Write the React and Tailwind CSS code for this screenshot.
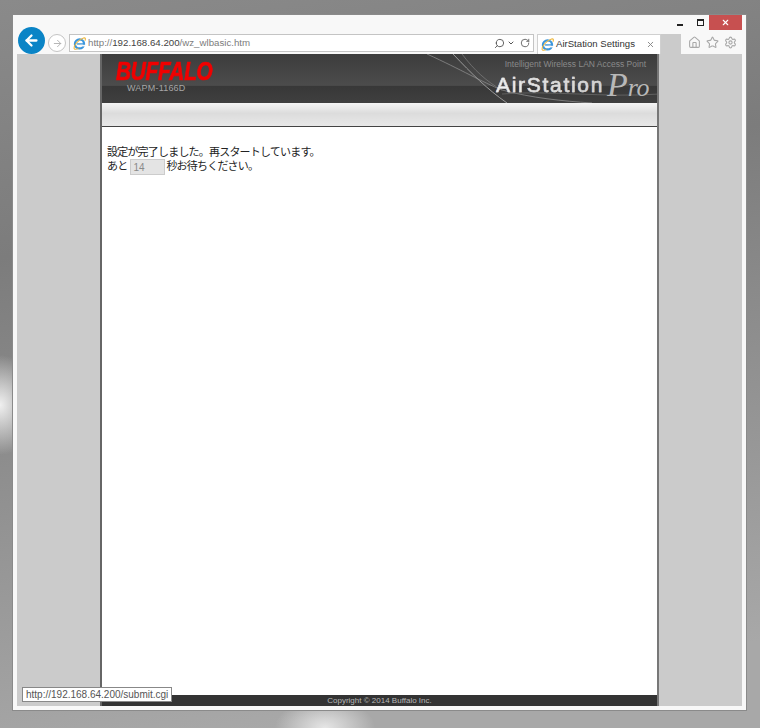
import { ArrowLeft, ArrowRight, Home, Star, Settings, Search, RotateCw, X, ChevronDown } from 'lucide-react';

const IeLogo = ({ size = 14 }) => (
  <svg width={size} height={size} viewBox="0 0 16 16" className="shrink-0">
    <circle cx="8" cy="8.500" r="5.600" fill="none" stroke="#3b96dc" strokeWidth="2.800" />
    <rect x="5" y="7.700" width="8" height="1.700" fill="#3b96dc" />
    <rect x="9" y="9.600" width="6" height="2" fill="#f8f8f8" />
    <path d="M1.500 14.500C.5 11 6 3.500 13 1.200c2.500-.6 2.800 1.200 1.600 3.300M1.500 14.500c1.200 1 3.500.5 5-.5" fill="none" stroke="#eeb73c" strokeWidth="1.300" />
  </svg>
);

const AddressBar = () => (
  <div className="ml-[3px] flex h-[18px] w-[465px] items-center border border-[#c4c4c4] bg-white pl-[3px] pr-[3px] font-['Liberation_Sans',sans-serif] text-[9.700px]">
    <IeLogo size={13} />
    <span className="ml-[2px] text-[#7c7c7c]">http://</span>
    <span className="text-[#444444]">192.168.64.200</span>
    <span className="text-[#7c7c7c]">/wz_wlbasic.htm</span>
    <div className="ml-auto flex items-center gap-[2px] text-[#555555]">
      <Search size={11} className="-scale-x-100" />
      <ChevronDown size={8} strokeWidth={3} />
      <RotateCw size={10} className="ml-[3px]" />
    </div>
  </div>
);

const Tab = () => (
  <div className="ml-[3px] flex h-[20px] w-[124px] items-center self-end border-x border-t border-[#d0d0d0] bg-white pl-[3px] pr-[3px] font-['Liberation_Sans',sans-serif] text-[9.600px] text-[#333333]">
    <IeLogo size={13} />
    <span className="ml-[2px]">AirStation Settings</span>
    <X size={9} strokeWidth={2.500} className="ml-auto mr-[2px] text-[#888888]" />
  </div>
);

const BrowserChrome = () => (
  <div className="h-[39px] shrink-0 bg-[#f8f8f8]">
    <div className="flex h-[15px] items-start justify-end">
      <div className="mt-[9px] h-[2px] w-[6px] bg-[#222222]" />
      <div className="ml-[14px] mt-[4px] h-[7px] w-[7px] border border-t-2 border-[#222222]" />
      <div className="ml-[5px] flex h-[15px] w-[33px] items-center justify-center bg-[#c75050] text-white">
        <X size={9} strokeWidth={3} />
      </div>
    </div>
    <div className="flex h-[24px] items-end pl-[1px]">
      <div className="relative z-10 h-[27px] w-[27px] shrink-0 overflow-hidden">
        <div className="flex h-[27px] w-[27px] items-center justify-center rounded-full bg-[#0a84c6] text-white">
          <ArrowLeft size={17} strokeWidth={3.200} />
        </div>
      </div>
      <div className="mb-[2px] ml-[3px] flex h-[18px] w-[18px] shrink-0 items-center justify-center rounded-full border border-[#c4c4c4] bg-white text-[#b0b0b0]">
        <ArrowRight size={11} />
      </div>
      <div className="mb-[2px] flex items-center">
        <AddressBar />
      </div>
      <Tab />
      <div className="h-[20px] w-[20px] bg-[#cbcbcb]" />
      <div className="mb-[5px] ml-[7px] flex items-center gap-[5px] text-[#a8a8a8]">
        <Home size={13} />
        <Star size={13} />
        <Settings size={13} />
      </div>
    </div>
  </div>
);

const Header = () => (
  <div className="relative h-[49px] shrink-0 overflow-hidden bg-[linear-gradient(#3c3c3c,#4c4c4c_64%,#383838_66%,#3f3f3f)]">
    <svg width="558" height="49" viewBox="0 0 558 49" fill="none" className="absolute inset-0">
      <path d="M325 0C360 16 380 28 400 36C430 44 460 47 490 49" stroke="#8a8a8a" strokeWidth="0.800" />
      <path d="M351 0C370 20 385 35 405 49" stroke="#999999" strokeWidth="1" />
      <path d="M360 0C372 16 385 28 400 36" stroke="#777777" strokeWidth="0.800" />
      <path d="M400 40C450 36 500 44 558 40" stroke="#6a6a6a" strokeWidth="0.800" />
    </svg>
    <div className="absolute left-[14px] top-[6px] origin-left scale-x-[0.800] font-['Liberation_Sans',sans-serif] text-[26px] font-bold italic leading-[22px] tracking-[-0.300px] text-[#f00000] [-webkit-text-stroke:0.700px_#f00000]">
      BUFFALO
    </div>
    <div className="absolute left-[25px] top-[28px] font-['Liberation_Sans',sans-serif] text-[9px] leading-[12px] tracking-[0.200px] text-[#a6a6a6]">
      WAPM-1166D
    </div>
    <div className="absolute right-[11px] top-[4px] font-['Liberation_Sans',sans-serif] text-[8.500px] leading-[12px] text-[#8a8a8a]">
      Intelligent Wireless LAN Access Point
    </div>
    <div className="absolute left-[394px] top-[19px] bg-[linear-gradient(90deg,#f4f4f4,#cfcfcf)] bg-clip-text font-['Liberation_Sans',sans-serif] text-[21px] leading-[24px] tracking-[1.700px] text-transparent [-webkit-text-stroke:0.500px_#d8d8d8]">
      AirStation
    </div>
    <div className="absolute left-[505px] top-[13px] flex items-baseline font-['Liberation_Serif',serif] italic leading-[36px] text-[#b8b8b8]">
      <span className="text-[34px]">P</span>
      <span className="text-[26px] tracking-[-0.500px]">ro</span>
    </div>
  </div>
);

const Notice = () => (
  <div className="pl-[5px] pt-[17px] font-['Noto_Sans_CJK_JP',sans-serif] text-[11px] leading-[15px] tracking-[-0.800px] text-[#222222]">
    <div>設定が完了しました。再スタートしています。</div>
    <div className="flex items-start leading-[12px]">
      <span>あと</span>
      <input
        readOnly
        value="14"
        className="ml-[3px] mr-[1px] h-[16px] w-[35px] border border-[#cccccc] bg-[#e4e4e4] pl-[2px] font-['Liberation_Sans',sans-serif] text-[10px] tracking-normal text-[#8a8a8a]"
      />
      <span>秒お待ちください。</span>
    </div>
  </div>
);

export default function App() {
  return (
    <div className="h-[728px] w-[760px] overflow-hidden bg-[radial-gradient(ellipse_40px_50px_at_0px_405px,#f0f0f0,transparent),radial-gradient(ellipse_50px_30px_at_325px_728px,#e6e6e6,transparent),linear-gradient(170deg,#8a8a8a,#7c7c7c_30%,#a8a8a8_90%)] pl-[12px] pt-[14px]">
      <div className="flex h-[697px] w-[735px] flex-col border border-[#8a8a8a] bg-[#f8f8f8] px-[4px] pb-[4px]">
        <BrowserChrome />
        <div className="relative flex min-h-0 flex-1 justify-center bg-[#cbcbcb]">
          <div className="flex w-[559px] flex-col border-x-2 border-l-[#666666] border-r-[#777777] bg-white">
            <Header />
            <div className="h-[23px] shrink-0 bg-[linear-gradient(#f4f4f4,#dcdcdc_45%,#e8e8e8)]" />
            <div className="h-px shrink-0 bg-[#444444]" />
            <div className="flex-1">
              <Notice />
            </div>
            <div className="h-[11px] shrink-0 bg-[#333333] text-center font-['Liberation_Sans',sans-serif] text-[8px] leading-[11px] text-[#b8b8b8]">
              Copyright © 2014 Buffalo Inc.
            </div>
          </div>
          <div className="absolute bottom-[4px] left-[5px] border border-[#888888] bg-white px-[3px] font-['Liberation_Sans',sans-serif] text-[10px] leading-[13px] text-[#555555]">
            http://192.168.64.200/submit.cgi
          </div>
        </div>
      </div>
    </div>
  );
}
